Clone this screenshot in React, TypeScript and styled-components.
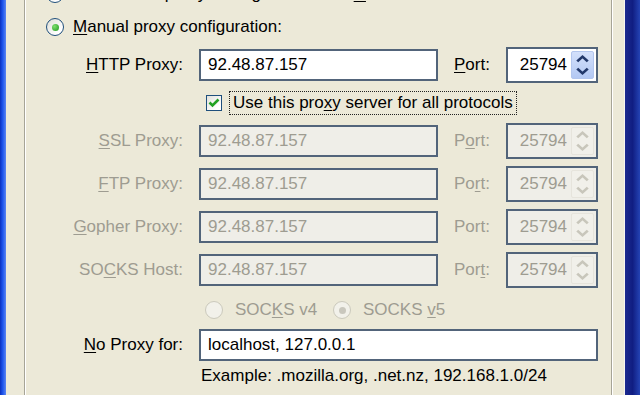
import React from 'react'
import styled, { createGlobalStyle, css } from 'styled-components'

const GlobalStyle = createGlobalStyle`
  html, body {
    margin: 0;
    padding: 0;
    background: #ece9d8;
  }
  body {
    font-family: "Liberation Sans", Arial, sans-serif;
    font-size: 17px;
    color: #000;
  }
`

const DISABLED_TEXT = '#9e9c91'
const FIELD_BORDER = '#52647a'

const StyledWindow = styled.div`
  width: 640px;
  height: 395px;
  overflow: hidden;
  display: flex;
  background: #ece9d8;
`

const StyledEdge = styled.div<{ $side: 'left' | 'right' }>`
  flex: none;
  ${({ $side }) =>
    $side === 'left'
      ? css`
          width: 6px;
          background: linear-gradient(90deg, #0a2fbf 0%, #1e55ec 45%, #5c86f2 100%);
        `
      : css`
          width: 15px;
          border-left: 1px solid #f7f6f0;
          background: linear-gradient(90deg, #1b2a90 0%, #101d82 50%, #2443b4 100%);
        `}
`

const StyledBody = styled.div`
  flex: 1;
  display: flex;
  padding: 0 12px 0 18px;
`

const StyledGroup = styled.div`
  flex: 1;
  border-left: 1px solid #a6a497;
  border-right: 1px solid #a6a497;
  box-shadow:
    inset 1px 0 0 #fff,
    1px 0 0 #fff;
`

const StyledContent = styled.div`
  margin-top: -18px;
  display: flex;
  flex-direction: column;
`

const StyledRadioRow = styled.div<{ $mt?: number }>`
  display: flex;
  align-items: center;
  gap: 9px;
  height: 24px;
  padding-left: 21px;
  margin-top: ${({ $mt }) => $mt ?? 0}px;
`

const StyledRadio = styled.span<{ $checked?: boolean; $disabled?: boolean }>`
  flex: none;
  position: relative;
  width: 18px;
  height: 18px;
  box-sizing: border-box;
  border-radius: 50%;
  border: 1.5px solid ${({ $disabled }) => ($disabled ? '#cbc9bc' : '#1f4f7c')};
  background: ${({ $disabled }) =>
    $disabled ? '#f2f1ea' : 'linear-gradient(135deg, #dcdcd4 0%, #ffffff 75%)'};

  &::after {
    content: '';
    display: ${({ $checked }) => ($checked ? 'block' : 'none')};
    position: absolute;
    left: 50%;
    top: 50%;
    width: 7px;
    height: 7px;
    margin: -3.5px 0 0 -3.5px;
    border-radius: 50%;
    background: ${({ $disabled }) =>
      $disabled ? '#c9c7bd' : 'radial-gradient(circle at 35% 35%, #7ede6e, #1f9b1f)'};
  }
`

const StyledKey = styled.span`
  text-decoration: underline;
  text-underline-offset: 2px;
`

const StyledText = styled.span<{ $disabled?: boolean }>`
  white-space: nowrap;
  color: ${({ $disabled }) => ($disabled ? DISABLED_TEXT : '#000')};
`

const StyledFieldRow = styled.div<{ $h?: number; $mt?: number }>`
  display: grid;
  grid-template-columns: 157px 239px 36px 92px;
  column-gap: 16px;
  align-items: center;
  height: ${({ $h }) => $h ?? 36}px;
  margin-top: ${({ $mt }) => $mt ?? 0}px;
  padding-left: 1px;
`

const StyledLabel = styled.label<{ $disabled?: boolean; $align?: 'left' | 'right' }>`
  text-align: ${({ $align }) => $align ?? 'right'};
  white-space: nowrap;
  color: ${({ $disabled }) => ($disabled ? DISABLED_TEXT : '#000')};
`

const StyledTextBox = styled.div<{ $disabled?: boolean; $wide?: boolean }>`
  grid-column: ${({ $wide }) => ($wide ? '2 / -1' : 'auto')};
  height: 32px;
  box-sizing: border-box;
  border: 2px solid ${FIELD_BORDER};
  padding-left: 7px;
  display: flex;
  align-items: center;
  white-space: nowrap;
  background: ${({ $disabled }) => ($disabled ? '#efeee8' : '#fff')};
  color: ${({ $disabled }) => ($disabled ? DISABLED_TEXT : '#000')};
`

const StyledPortBox = styled.div<{ $disabled?: boolean }>`
  height: 36px;
  box-sizing: border-box;
  border: 2px solid ${FIELD_BORDER};
  padding: 2px;
  display: flex;
  align-items: stretch;
  background: ${({ $disabled }) => ($disabled ? '#efeee8' : '#fff')};
  color: ${({ $disabled }) => ($disabled ? DISABLED_TEXT : '#000')};
`

const StyledPortValue = styled.span`
  flex: 1;
  display: flex;
  align-items: center;
  justify-content: flex-end;
  padding-right: 4px;
`

const StyledSpin = styled.div<{ $disabled?: boolean }>`
  flex: none;
  width: 21px;
  display: flex;
  flex-direction: column;
  border-radius: 2px;
  border: 1px solid ${({ $disabled }) => ($disabled ? '#e6e4dc' : '#b3c6ee')};
  background: ${({ $disabled }) =>
    $disabled ? '#f1f0ea' : 'linear-gradient(180deg, #d3e0fb 0%, #b3c8f3 100%)'};

  svg {
    display: block;
    flex: 1;
    width: 100%;
  }
`

const StyledCheckWrap = styled.div`
  grid-column: 2 / -1;
  display: flex;
  align-items: center;
  gap: 7px;
  padding-left: 7px;
`

const StyledCheckbox = styled.span`
  flex: none;
  width: 16px;
  height: 16px;
  box-sizing: border-box;
  border: 1.5px solid #1f4f7c;
  background: linear-gradient(135deg, #e2e2dc 0%, #ffffff 80%);
  display: flex;
  align-items: center;
  justify-content: center;
`

const StyledFocus = styled.span`
  height: 24px;
  box-sizing: border-box;
  border: 1px dotted #222;
  padding: 0 3px;
  display: flex;
  align-items: center;
  white-space: nowrap;
`

const StyledOptions = styled.div`
  grid-column: 2 / -1;
  display: flex;
  align-items: center;
  padding-left: 6px;
`

const StyledOption = styled.span<{ $w?: number }>`
  display: flex;
  align-items: center;
  gap: 12px;
  width: ${({ $w }) => ($w ? `${$w}px` : 'auto')};
`

const StyledHint = styled.div`
  grid-column: 2 / -1;
  padding-left: 2px;
  white-space: nowrap;
`

function Spin({ disabled }: { disabled?: boolean }) {
  const stroke = disabled ? '#c8c6bb' : '#22386a'
  return (
    <StyledSpin $disabled={disabled}>
      <svg viewBox="0 0 20 14" preserveAspectRatio="none">
        <path d="M5 10 L10 5 L15 10" fill="none" stroke={stroke} strokeWidth="2.6" />
      </svg>
      <svg viewBox="0 0 20 14" preserveAspectRatio="none">
        <path d="M5 4 L10 9 L15 4" fill="none" stroke={stroke} strokeWidth="2.6" />
      </svg>
    </StyledSpin>
  )
}

type Row = { pre: string; key: string; post: string; port: [string, string, string] }

const rows: Row[] = [
  { pre: '', key: 'S', post: 'SL Proxy:', port: ['P', 'o', 'rt:'] },
  { pre: '', key: 'F', post: 'TP Proxy:', port: ['Po', 'r', 't:'] },
  { pre: '', key: 'G', post: 'opher Proxy:', port: ['Port:', '', ''] },
  { pre: 'SO', key: 'C', post: 'KS Host:', port: ['Por', 't', ':'] },
]

function Keyed({ pre, k, post }: { pre: string; k: string; post: string }) {
  return (
    <>
      {pre}
      {k && <StyledKey>{k}</StyledKey>}
      {post}
    </>
  )
}

export default function App() {
  return (
    <>
      <GlobalStyle />
      <StyledWindow>
        <StyledEdge $side="left" />
        <StyledBody>
          <StyledGroup>
            <StyledContent>
              <StyledRadioRow>
                <StyledRadio />
                <StyledText>
                  Auto-detect proxy settings for this net<StyledKey>w</StyledKey>ork
                </StyledText>
              </StyledRadioRow>
              <StyledRadioRow $mt={9}>
                <StyledRadio $checked />
                <StyledText>
                  <StyledKey>M</StyledKey>anual proxy configuration:
                </StyledText>
              </StyledRadioRow>

              <StyledFieldRow $mt={8}>
                <StyledLabel>
                  <StyledKey>H</StyledKey>TTP Proxy:
                </StyledLabel>
                <StyledTextBox>92.48.87.157</StyledTextBox>
                <StyledLabel as="span" $align="left">
                  <StyledKey>P</StyledKey>ort:
                </StyledLabel>
                <StyledPortBox>
                  <StyledPortValue>25794</StyledPortValue>
                  <Spin />
                </StyledPortBox>
              </StyledFieldRow>

              <StyledFieldRow $h={40}>
                <StyledCheckWrap>
                  <StyledCheckbox>
                    <svg width="12" height="12" viewBox="0 0 12 12">
                      <path d="M1.5 5.5 L4.5 8.5 L10.5 2.5" fill="none" stroke="#21a121" strokeWidth="2.6" />
                    </svg>
                  </StyledCheckbox>
                  <StyledFocus>
                    Use this pro<StyledKey>x</StyledKey>y server for all protocols
                  </StyledFocus>
                </StyledCheckWrap>
              </StyledFieldRow>

              {rows.map((r, i) => (
                <StyledFieldRow key={r.post} $mt={i === 0 ? 0 : 7}>
                  <StyledLabel $disabled>
                    <Keyed pre={r.pre} k={r.key} post={r.post} />
                  </StyledLabel>
                  <StyledTextBox $disabled>92.48.87.157</StyledTextBox>
                  <StyledLabel as="span" $disabled $align="left">
                    <Keyed pre={r.port[0]} k={r.port[1]} post={r.port[2]} />
                  </StyledLabel>
                  <StyledPortBox $disabled>
                    <StyledPortValue>25794</StyledPortValue>
                    <Spin disabled />
                  </StyledPortBox>
                </StyledFieldRow>
              ))}

              <StyledFieldRow $h={28} $mt={8}>
                <StyledOptions>
                  <StyledOption $w={128}>
                    <StyledRadio $disabled />
                    <StyledText $disabled>
                      SOC<StyledKey>K</StyledKey>S v4
                    </StyledText>
                  </StyledOption>
                  <StyledOption>
                    <StyledRadio $disabled $checked />
                    <StyledText $disabled>
                      SOCKS <StyledKey>v</StyledKey>5
                    </StyledText>
                  </StyledOption>
                </StyledOptions>
              </StyledFieldRow>

              <StyledFieldRow $mt={3}>
                <StyledLabel>
                  <StyledKey>N</StyledKey>o Proxy for:
                </StyledLabel>
                <StyledTextBox $wide>localhost, 127.0.0.1</StyledTextBox>
              </StyledFieldRow>

              <StyledFieldRow $h={26}>
                <StyledHint>Example: .mozilla.org, .net.nz, 192.168.1.0/24</StyledHint>
              </StyledFieldRow>

              <StyledRadioRow $mt={8}>
                <StyledRadio />
                <StyledText>
                  <StyledKey>A</StyledKey>utomatic proxy configuration URL:
                </StyledText>
              </StyledRadioRow>
            </StyledContent>
          </StyledGroup>
        </StyledBody>
        <StyledEdge $side="right" />
      </StyledWindow>
    </>
  )
}
